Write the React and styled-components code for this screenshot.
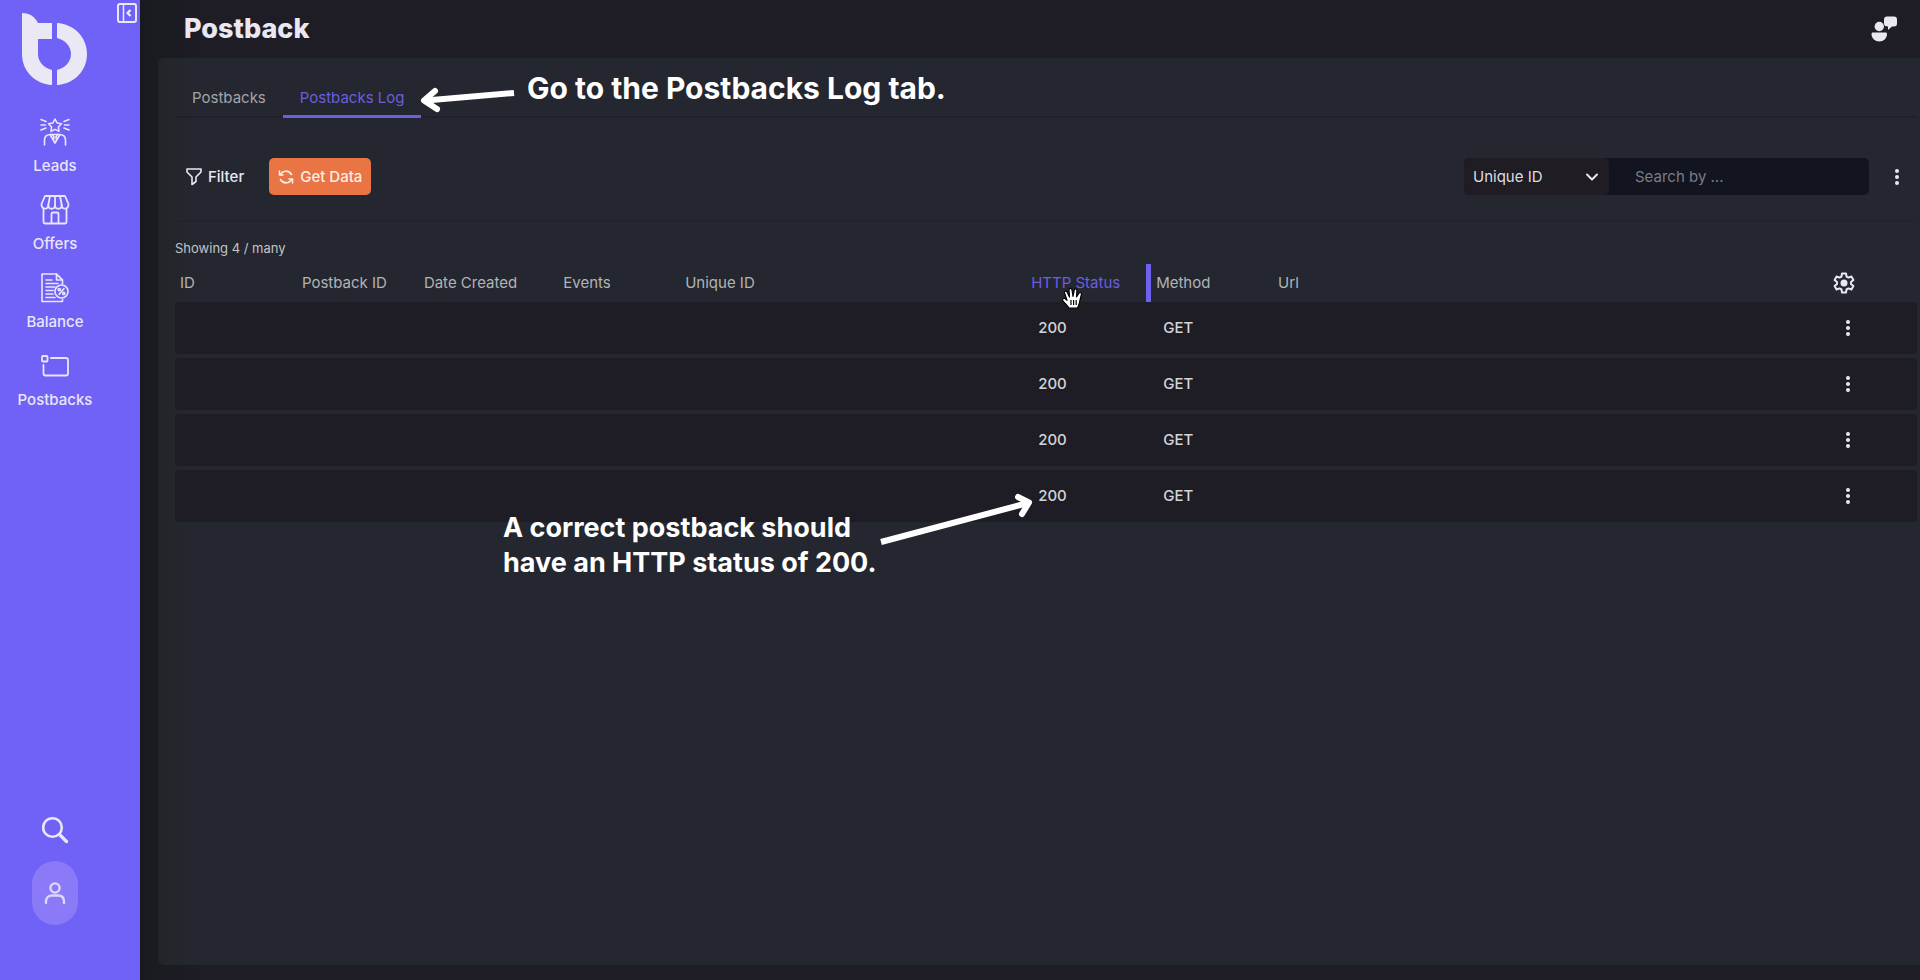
import React from "react";
import styled, { createGlobalStyle, css } from "styled-components";

const GlobalStyle = createGlobalStyle`
  *, *::before, *::after { box-sizing: border-box; }
  body {
    margin: 0;
    background: #1e1c25;
    color: #e9e8f2;
    font-family: Inter, "Open Sans", sans-serif;
    font-size: 15px;
    line-height: 20px;
  }
  button, input, select { font: inherit; color: inherit; }
  svg { display: block; flex: none; }
`;

const Page = styled.div`
  position: relative;
  display: flex;
  min-height: 100vh;
  overflow: hidden;
`;

const bareButton = css`
  display: flex;
  align-items: center;
  justify-content: center;
  padding: 0;
  border: 0;
  background: none;
  cursor: pointer;
`;

/* Sidebar */
const Sidebar = styled.aside`
  position: relative;
  flex: none;
  display: flex;
  flex-direction: column;
  align-items: center;
  width: 140px;
  padding: 13px 30px 55px 0;
  background: #7162f7;
`;

const CollapseButton = styled.button`
  ${bareButton}
  position: absolute;
  top: 2px;
  right: 2px;
`;

const SideNav = styled.nav`
  display: flex;
  flex-direction: column;
  gap: 10px;
  margin-top: 31px;
`;

const NavLink = styled.a`
  display: flex;
  flex-direction: column;
  align-items: center;
  gap: 9px;
  height: 68px;
  color: #e9e6fc;
  font-weight: 500;
  text-decoration: none;
`;

const SideFooter = styled.div`
  display: flex;
  flex-direction: column;
  align-items: center;
  gap: 17px;
  margin-top: auto;
`;

const IconButton = styled.button`
  ${bareButton}
`;

const ProfileButton = styled.button`
  ${bareButton}
  width: 46px;
  height: 64px;
  border-radius: 23px;
  background: #8a7af8;
`;

/* Main area */
const Main = styled.main`
  flex: 1;
  min-width: 0;
  display: flex;
  flex-direction: column;
  padding-bottom: 15px;
  background: linear-gradient(90deg, #18191f 0, #1b1b22 18px, #1e1c25 60px);
`;

const Header = styled.header`
  display: flex;
  align-items: center;
  justify-content: space-between;
  height: 58px;
  padding: 0 23px 0 44px;
`;

const Title = styled.h1`
  margin: 0;
  font-size: 27px;
  line-height: 36px;
  font-weight: 800;
`;

const Panel = styled.section`
  flex: 1;
  margin-left: 18px;
  padding: 22px 3px 0 17px;
  border-radius: 6px 0 0 6px;
  background: linear-gradient(90deg, #222528 0, #24272f 32px);
`;

const TabBar = styled.div`
  display: flex;
  height: 38px;
  border-bottom: 2px solid #1f2029;
`;

const Tab = styled.button`
  ${bareButton}
  height: 38px;
  padding: 0 17px;
  border-bottom: 3px solid ${(p) => (p.$active ? "#6d60dc" : "transparent")};
  color: ${(p) => (p.$active ? "#6c5edc" : "#a5a5a9")};
`;

const Toolbar = styled.div`
  display: flex;
  align-items: center;
  gap: 8px;
  padding: 40px 0 25px 11px;
  border-bottom: 2px solid #22232b;
`;

const ToolbarActions = styled.div`
  display: flex;
  align-items: center;
  gap: 25px;
  margin-right: auto;
`;

const FilterButton = styled.button`
  ${bareButton}
  gap: 6px;
  font-weight: 500;
`;

const GetDataButton = styled.button`
  ${bareButton}
  gap: 6px;
  height: 37px;
  padding: 0 9px;
  border-radius: 5px;
  background: #e87543;
  color: #fbeee8;
  font-weight: 500;
`;

const SearchGroup = styled.div`
  display: flex;
  width: 405px;
  height: 37px;
  border-radius: 5px;
  background: #12141f;
`;

const SelectWrap = styled.label`
  position: relative;
  flex: none;
  width: 145px;

  svg {
    position: absolute;
    right: 10px;
    top: 12px;
    pointer-events: none;
  }
`;

const Select = styled.select`
  width: 100%;
  height: 100%;
  padding: 0 9px;
  border: 0;
  border-radius: 5px;
  background: #1f1c24;
  color: #dddde2;
  appearance: none;
`;

const SearchInput = styled.input`
  flex: 1;
  min-width: 0;
  padding: 0 26px;
  border: 0;
  background: none;

  &::placeholder { color: #7b7c85; opacity: 1; }
`;

const MenuButton = styled.button`
  ${bareButton}
  width: ${(p) => (p.$wide ? "40px" : "16px")};
  height: 24px;
`;

const Summary = styled.p`
  margin: 16px 0 2px;
  color: #c4c4c8;
  font-size: 13px;
`;

/* Table */
const Table = styled.table`
  width: 100%;
  border-collapse: separate;
  border-spacing: 0 4px;
  table-layout: fixed;
`;

const Col = styled.col`
  width: ${(p) => p.$w};
`;

const HeadCell = styled.th`
  position: relative;
  height: 34px;
  padding: 4px 0 0 5px;
  color: ${(p) => (p.$active ? "#6c5ee0" : "#b3b3b7")};
  font-weight: 400;
  text-align: left;
  white-space: nowrap;

  ${(p) => p.$active && css`
    &::after {
      content: "";
      position: absolute;
      top: 0;
      right: 0;
      bottom: -4px;
      width: 5px;
      background: #6f61ee;
    }
  `}
`;

const Cell = styled.td`
  height: 52px;
  padding: 0 0 0 12px;
  background: #1e1c25;
  color: #d4d4d9;
  font-weight: 500;

  &:first-child { border-radius: 4px 0 0 4px; }
  &:last-child { border-radius: 0 4px 4px 0; }
`;

/* Notes laid over the page */
const Overlay = styled.div`
  position: absolute;
  left: ${(p) => p.$x}px;
  top: ${(p) => p.$y}px;
  color: #fff;
  pointer-events: none;
`;

const Note = styled.p`
  margin: 0;
  font-size: ${(p) => p.$size}px;
  line-height: 35px;
  font-weight: 700;
  white-space: nowrap;
`;

const Logo = () => (
  <svg width="66" height="73" viewBox="0 0 66 73" fill="#e9e8f4" aria-label="Logo">
    <path d="M0 0C8 0 13 4 16 10H30V26H16V41C16 49 22 55 30 57V72C13 71 0 58 0 41Z" />
    <path d="M35 10C52 11 65 24 65 41S52 71 35 72V57C43 55 49 49 49 41S43 27 35 25Z" />
  </svg>
);

const CollapseIcon = () => (
  <svg width="22" height="22" viewBox="0 0 22 22" fill="none" stroke="#e9e8f4" strokeWidth="2" strokeLinejoin="round">
    <rect x="2" y="2" width="18" height="18" rx="2" />
    <path d="M7.500 2V20" strokeWidth="1.500" />
    <path d="M14.500 8L11.500 11L14.500 14" strokeWidth="2.400" />
  </svg>
);

const line = { fill: "none", stroke: "currentColor", strokeLinecap: "round", strokeLinejoin: "round" };

const LeadsIcon = () => (
  <svg width="30" height="28" viewBox="0 0 30 28" {...line} strokeWidth="1.600">
    <path d="M15 1L17.100 5L21.500 5.800L18.400 9L19 13.300L15 11.400L11 13.300L11.600 9L8.500 5.800L12.900 5Z" />
    <path d="M1 1.500L6 3.500M1 7H5.500M1 12L6 10M29 1.500L24 3.500M29 7H24.500M29 12L24 10" />
    <path d="M4.500 27V22C4.500 18 7 16.500 11 16.500H19C23 16.500 25.500 18 25.500 22V27" />
    <path d="M10 16.500L15 25L20 16.500M12.500 16.500L14 19L13.500 22M17.500 16.500L16 19L16.500 22" />
  </svg>
);

const OffersIcon = () => (
  <svg width="30" height="30" viewBox="0 0 30 30" {...line} strokeWidth="1.800">
    <path d="M5 1H25L28.500 9C28.500 15 21.700 15 21.700 10C21.700 15 15 15 15 10C15 15 8.300 15 8.300 10C8.300 15 1.500 15 1.500 9Z" />
    <path d="M10 1L8.300 10M15 1V10M20 1L21.700 10" />
    <path d="M3.500 13.500V27C3.500 28 4 28.500 5 28.500H25C26 28.500 26.500 28 26.500 27V13.500" />
    <path d="M11.500 28V19C11.500 18 12 17.500 13 17.500H17C18 17.500 18.500 18 18.500 19V28" />
  </svg>
);

const BalanceIcon = () => (
  <svg width="28" height="30" viewBox="0 0 28 30" {...line} strokeWidth="1.600">
    <path d="M21.500 11V7L15.500 1H1V28.500H21.500V26.500" />
    <path d="M15.500 1V7H21.500M17 2.500L20.500 6" />
    <path d="M5 7H11M5 10.500H17M5 14H14M5 17.500H12M5 21H12M5 24.500H14" />
    <circle cx="20.500" cy="18.500" r="6.500" />
    <path d="M23 15.500L18 21.500" />
    <circle cx="18.300" cy="16.600" r="1.100" />
    <circle cx="22.700" cy="20.400" r="1.100" />
  </svg>
);

const PostbacksIcon = () => (
  <svg width="28" height="22" viewBox="0 0 28 22" {...line} strokeWidth="1.800">
    <rect x="1" y="1" width="5.500" height="5.500" rx="1" />
    <path d="M10 3H25C26.500 3 27 3.500 27 5V18.500C27 20 26.500 20.500 25 20.500H4.500C3 20.500 2.500 20 2.500 18.500V10" />
  </svg>
);

const SearchIcon = () => (
  <svg width="28" height="28" viewBox="0 0 28 28" {...line} stroke="#e9e8f4" strokeWidth="2.600">
    <circle cx="11.500" cy="11.500" r="9.300" />
    <path d="M18.500 18.500L25.500 25.500" strokeWidth="3.200" />
  </svg>
);

const UserIcon = () => (
  <svg width="22" height="24" viewBox="0 0 22 24" {...line} stroke="#dcd8fb" strokeWidth="2.400">
    <circle cx="11" cy="7" r="4.600" />
    <path d="M2 22V20.500C2 16.500 4.500 14.500 8 14.500H14C17.500 14.500 20 16.500 20 20.500V22" />
  </svg>
);

const SupportIcon = () => (
  <svg width="26" height="26" viewBox="0 0 26 26" fill="#e9e8f2">
    <circle cx="8.300" cy="10.500" r="4.700" />
    <path d="M2 16.500H14.500C15.500 16.500 16 17 16 18C16 22.500 12.500 25.500 8.300 25.500S.5 22.500.5 18C.5 17 1 16.500 2 16.500Z" />
    <path d="M16 .5H23C25 .5 26 1.500 26 3.500V7.500C26 9.500 25 10.500 23 10.500H21L17 14V10.500C14 10.500 13 9.500 13 7.500V3.500C13 1.500 14 .5 16 .5Z" />
  </svg>
);

const FilterIcon = () => (
  <svg width="16" height="18" viewBox="0 0 16 18" {...line} strokeWidth="1.600">
    <path d="M1 1H15V4L10 9V13.500L6 16.500V9L1 4Z" />
  </svg>
);

const RefreshIcon = () => (
  <svg width="16" height="16" viewBox="0 0 16 16" {...line} strokeWidth="1.600">
    <path d="M2.500 6C4 1.500 10.500 .5 13.500 5.500M13.500 10C12 14.500 5.500 15.500 2.500 10.500" />
    <path d="M1.500 2V6H5M14.500 14V10H11" />
  </svg>
);

const ChevronIcon = () => (
  <svg width="14" height="14" viewBox="0 0 14 14" {...line} strokeWidth="2">
    <path d="M2 4.500L7 9.500L12 4.500" />
  </svg>
);

const DotsIcon = () => (
  <svg width="6" height="18" viewBox="0 0 6 18" fill="#e9e8f2">
    <circle cx="3" cy="3" r="2" />
    <circle cx="3" cy="9" r="2" />
    <circle cx="3" cy="15" r="2" />
  </svg>
);

const GearIcon = () => (
  <svg width="22" height="22" viewBox="0 0 22 22" {...line} stroke="#e9e8f2" strokeWidth="2">
    <path d="M9 1.500H13L13.500 4.500L15.500 5.600L18.400 4.500L20.400 8L18 10V12L20.400 14L18.400 17.500L15.500 16.400L13.500 17.500L13 20.500H9L8.500 17.500L6.500 16.400L3.600 17.500L1.600 14L4 12V10L1.600 8L3.600 4.500L6.500 5.600L8.500 4.500Z" />
    <circle cx="11" cy="11" r="3.500" fill="#e9e8f2" stroke="none" />
  </svg>
);

const HandCursor = () => (
  <svg width="23" height="24" viewBox="0 0 23 24" fill="#fff" stroke="#000" strokeWidth="1.200" strokeLinejoin="round">
    <path d="M8 21C6 18 3.500 16 1.800 13.500C.8 11.500 3 10.500 4.500 12L6 13.300L3.500 6C3 4 5.500 3.500 6.200 5.200L8.500 10L8 2.800C8 1 10.700 1 11 2.800L12 9.500L13.300 2.800C13.800 1.200 16 1.600 15.900 3.400L15.500 10L18 6.200C19 4.800 21 5.800 20.400 7.500L18.800 14C18.300 17 17.500 18.500 16.500 21Z" />
    <path d="M10 13V18M12.600 13V18M15.200 13V18" />
  </svg>
);

const TabArrow = () => (
  <svg width="100" height="30" viewBox="0 0 100 30" {...line} strokeWidth="6">
    <path d="M97 8L9 15.500" strokeLinecap="butt" />
    <path d="M18 6L7 15.500L20 24" />
  </svg>
);

const StatusArrow = () => (
  <svg width="160" height="60" viewBox="0 0 160 60" {...line} strokeWidth="6">
    <path d="M1 52L148 13" strokeLinecap="butt" />
    <path d="M138 7L149 12.500L142 24" />
  </svg>
);

const navItems = [
  { label: "Leads", Icon: LeadsIcon },
  { label: "Offers", Icon: OffersIcon },
  { label: "Balance", Icon: BalanceIcon },
  { label: "Postbacks", Icon: PostbacksIcon },
];

const NavIconBox = styled.span`
  display: flex;
  align-items: center;
  height: 30px;
`;

const columns = [
  { label: "ID", width: "7%" },
  { label: "Postback ID", width: "7%" },
  { label: "Date Created", width: "8%" },
  { label: "Events", width: "7%" },
  { label: "Unique ID", width: "346px" },
  { label: "HTTP Status", width: "125px", active: true },
  { label: "Method", width: "7%" },
  { label: "Url", width: "auto" },
];

const rows = [1, 2, 3, 4].map((key) => ({ key, status: "200", method: "GET" }));

export default function App() {
  return (
    <>
      <GlobalStyle />
      <Page>
        <Sidebar>
          <CollapseButton aria-label="Collapse sidebar"><CollapseIcon /></CollapseButton>
          <Logo />
          <SideNav>
            {navItems.map(({ label, Icon }) => (
              <NavLink href="#" key={label}>
                <NavIconBox><Icon /></NavIconBox>
                {label}
              </NavLink>
            ))}
          </SideNav>
          <SideFooter>
            <IconButton aria-label="Search"><SearchIcon /></IconButton>
            <ProfileButton aria-label="Profile"><UserIcon /></ProfileButton>
          </SideFooter>
        </Sidebar>

        <Main>
          <Header>
            <Title>Postback</Title>
            <IconButton aria-label="Support"><SupportIcon /></IconButton>
          </Header>
          <Panel>
            <TabBar role="tablist">
              <Tab role="tab">Postbacks</Tab>
              <Tab role="tab" aria-selected="true" $active>Postbacks Log</Tab>
            </TabBar>
            <Toolbar>
              <ToolbarActions>
                <FilterButton><FilterIcon />Filter</FilterButton>
                <GetDataButton><RefreshIcon />Get Data</GetDataButton>
              </ToolbarActions>
              <SearchGroup>
                <SelectWrap>
                  <Select aria-label="Search field" defaultValue="uid">
                    <option value="uid">Unique ID</option>
                  </Select>
                  <ChevronIcon />
                </SelectWrap>
                <SearchInput aria-label="Search" placeholder="Search by ..." />
              </SearchGroup>
              <MenuButton $wide aria-label="More options"><DotsIcon /></MenuButton>
            </Toolbar>
            <Summary>Showing 4 / many</Summary>
            <Table>
              <colgroup>
                {columns.map((c) => <Col key={c.label} $w={c.width} />)}
                <Col $w="89px" />
              </colgroup>
              <thead>
                <tr>
                  {columns.map((c) => (
                    <HeadCell key={c.label} $active={c.active}>{c.label}</HeadCell>
                  ))}
                  <HeadCell>
                    <IconButton aria-label="Column settings"><GearIcon /></IconButton>
                  </HeadCell>
                </tr>
              </thead>
              <tbody>
                {rows.map((row) => (
                  <tr key={row.key}>
                    <Cell /><Cell /><Cell /><Cell /><Cell />
                    <Cell>{row.status}</Cell>
                    <Cell>{row.method}</Cell>
                    <Cell />
                    <Cell>
                      <MenuButton aria-label="Row options"><DotsIcon /></MenuButton>
                    </Cell>
                  </tr>
                ))}
              </tbody>
            </Table>
          </Panel>
        </Main>

        <Overlay $x={417} $y={85}><TabArrow /></Overlay>
        <Overlay $x={527} $y={71}><Note $size={30}>Go to the Postbacks Log tab.</Note></Overlay>
        <Overlay $x={880} $y={490}><StatusArrow /></Overlay>
        <Overlay $x={503} $y={510}>
          <Note $size={27}>A correct postback should<br />have an HTTP status of 200.</Note>
        </Overlay>
        <Overlay $x={1061} $y={287}><HandCursor /></Overlay>
      </Page>
    </>
  );
}
